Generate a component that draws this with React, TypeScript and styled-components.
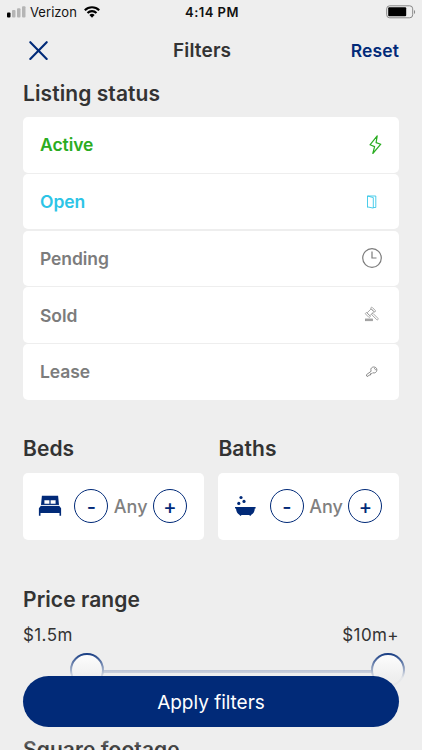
import React from "react";
import styled, { createGlobalStyle } from "styled-components";

const NAVY = "#012a78";

const GlobalStyle = createGlobalStyle`
  * { box-sizing: border-box; }
  html, body { margin: 0; padding: 0; background: #eeeeee; overflow: hidden; }
  body { font-family: Inter, "Liberation Sans", sans-serif; color: #333; }
`;

const Screen = styled.main`
  position: relative;
  width: 422px;
  height: 750px;
  overflow: hidden;
  background: #eeeeee;
`;

const StatusBar = styled.div`
  display: grid;
  grid-template-columns: 1fr auto 1fr;
  align-items: center;
  height: 24px;
  padding: 0 6px 0 7px;
  color: #111;
`;

const Carrier = styled.div`
  display: flex;
  align-items: center;
  font-size: 13px;
  line-height: 24px;
  letter-spacing: 0.05px;
  svg { display: block; }
  span { margin: 0 7px 0 4px; }
`;

const Clock = styled.div`
  padding-left: 1px;
  font-size: 13px;
  font-weight: 600;
  line-height: 24px;
  letter-spacing: 0.45px;
`;

const BatterySlot = styled.div`
  display: flex;
  justify-content: flex-end;
`;

const Header = styled.header`
  display: grid;
  grid-template-columns: 144px auto 1fr;
  align-items: center;
  height: 54px;
  padding: 0 23px 0 29px;
`;

const IconButton = styled.button`
  display: flex;
  width: 20px;
  height: 20px;
  padding: 0;
  border: 0;
  background: none;
`;

const Title = styled.h1`
  margin: 0;
  font-size: 19px;
  font-weight: 600;
  line-height: 24px;
  letter-spacing: 0.15px;
`;

const Reset = styled.button`
  justify-self: end;
  padding: 0;
  border: 0;
  background: none;
  font: 600 17.5px/24px Inter, sans-serif;
  letter-spacing: 0.1px;
  color: ${NAVY};
`;

const Content = styled.div`
  padding: 1px 23px 0;
`;

const Heading = styled.h2`
  margin: 0;
  font-size: 21px;
  font-weight: 600;
  line-height: 30px;
  letter-spacing: 0.08px;
  white-space: nowrap;
`;

const StatusList = styled.div`
  display: grid;
  grid-auto-rows: 55.5px;
  row-gap: 1.25px;
  margin-top: 8px;
`;

const StatusRow = styled.div<{ $color: string }>`
  display: flex;
  align-items: center;
  justify-content: space-between;
  padding: 0 16px 0 17px;
  border-radius: 5px;
  background: #fff;
  color: ${(p) => p.$color};
  font-size: 17.5px;
  font-weight: 600;
  letter-spacing: -0.07px;
  svg { display: block; }
`;

const Rooms = styled.div`
  display: grid;
  grid-template-columns: 180.5px 180.5px;
  column-gap: 14.9px;
  margin-top: 34px;
`;

const CounterCard = styled.div`
  display: flex;
  align-items: center;
  height: 67px;
  margin-top: 9px;
  padding-left: 15.4px;
  border-radius: 5px;
  background: #fff;
  svg { display: block; }
`;

const RoundButton = styled.button`
  display: flex;
  align-items: center;
  justify-content: center;
  width: 34px;
  height: 34px;
  padding: 0;
  border: 1.3px solid ${NAVY};
  border-radius: 50%;
  background: #fff;
  font: 500 20px/30px Inter, sans-serif;
  color: ${NAVY};
  span { padding-top: 2px; }
`;

const CounterValue = styled.span`
  width: 44.6px;
  text-align: center;
  font-size: 18px;
  font-weight: 500;
  color: #808080;
`;

const CounterIcon = styled.span`
  width: 36px;
`;

const PriceSection = styled.section`
  margin-top: 45px;
`;

const PriceLabels = styled.div`
  display: flex;
  justify-content: space-between;
  margin-top: 7px;
  font-size: 17px;
  line-height: 26px;
  letter-spacing: 0.4px;
`;

const Slider = styled.div`
  position: relative;
  height: 34px;
  margin-top: 5px;
`;

const Track = styled.div`
  position: absolute;
  top: 17px;
  left: 64px;
  right: 12px;
  height: 3px;
  background: #4f69a0;
`;

const Thumb = styled.div<{ $x: number }>`
  position: absolute;
  top: 0;
  left: ${(p) => p.$x}px;
  width: 34px;
  height: 34px;
  border: 2px solid ${NAVY};
  border-radius: 50%;
  background: #fff;
`;

const FootageSection = styled.section`
  margin-top: 48px;
`;

const Footer = styled.div`
  position: absolute;
  left: 0;
  right: 0;
  bottom: 0;
  height: 99px;
  padding: 25px 23px 0;
  background: linear-gradient(
    to bottom,
    rgba(238, 238, 238, 0) 0,
    rgba(238, 238, 238, 0.97) 27px,
    rgba(238, 238, 238, 0.97) 70px,
    rgba(238, 238, 238, 0) 100%
  );
`;

const Apply = styled.button`
  display: block;
  width: 376px;
  height: 51px;
  padding: 0;
  border: 0;
  border-radius: 26px;
  background: ${NAVY};
  color: #fff;
  font: 400 19px/53px Inter, sans-serif;
  letter-spacing: -0.02px;
`;

const Signal = () => (
  <svg width="19" height="12" viewBox="0 0 19 12">
    <rect x="0" y="6.5" width="3.5" height="5" rx="1" fill="#000" />
    <rect x="5" y="4" width="3.5" height="7.5" rx="1" fill="#b5b5b5" />
    <rect x="10" y="2.3" width="3.5" height="9.2" rx="1" fill="#b5b5b5" />
    <rect x="15" y="0.3" width="3.5" height="11.2" rx="1" fill="#b5b5b5" />
  </svg>
);

const Wifi = () => (
  <svg width="16" height="12" viewBox="0 0 16 12" fill="none" stroke="#000" strokeWidth="2.1">
    <path d="M.8 4.3a10.2 10.2 0 0 1 14.4 0M3.5 7a6.4 6.4 0 0 1 9 0" />
    <path d="M5.4 9a3.7 3.7 0 0 1 5.2 0L8 11.7Z" fill="#000" stroke="none" />
  </svg>
);

const Battery = () => (
  <svg width="30" height="14" viewBox="0 0 30 14">
    <rect x=".7" y=".8" width="26" height="12" rx="3" fill="none" stroke="#888" />
    <rect x="2.2" y="2.3" width="18" height="9" rx="1" fill="#000" />
    <path d="M28 5v4c1.5-.7 1.5-3.3 0-4Z" fill="#888" />
  </svg>
);

const Bolt = () => (
  <svg width="16" height="22" viewBox="0 0 16 22" fill="none" stroke="currentColor" strokeWidth="1.2" strokeLinejoin="round">
    <path d="M10.2 1.9 3 10.8l4.6 1.8-1.8 6.9 8-9.3-4.7-1.6Z" />
  </svg>
);

const Door = () => (
  <svg width="22" height="22" viewBox="0 0 22 22" fill="none" stroke="currentColor" strokeWidth=".85">
    <path d="M6.5 16.5V5h8.3v11.5M6.5 5l5.8 1.6v10.5l-5.8-1.2M12.3 16.5h2.5" />
  </svg>
);

const ClockIcon = () => (
  <svg width="22" height="22" viewBox="0 0 22 22" fill="none" stroke="currentColor" strokeWidth="1.2">
    <circle cx="11" cy="11" r="9.3" />
    <path d="M11 4.5V11h4.5" />
  </svg>
);

const Gavel = () => (
  <svg width="22" height="22" viewBox="0 0 22 22" fill="none" stroke="#999" strokeWidth=".8">
    <g transform="rotate(-45 9.5 8.3)">
      <rect x="6.6" y="6.3" width="5.8" height="4" />
      <rect x="4.8" y="5.4" width="1.8" height="5.8" rx=".7" />
      <rect x="12.4" y="5.4" width="1.8" height="5.8" rx=".7" />
      <rect x="8.7" y="10.3" width="1.8" height="8.4" rx=".8" />
    </g>
    <rect x="4.4" y="15" width="7" height="1.7" fill="#aaa" />
  </svg>
);

const KeyIcon = () => (
  <svg width="22" height="22" viewBox="0 0 22 22" fill="none" stroke="currentColor" strokeWidth=".9" strokeLinejoin="round">
    <path d="M10.2 10.2C9 7.5 11 5.8 13.2 6c2.4.2 3.4 2.7 2.2 4.6-.9 1.4-2.4 1.6-3.6 1.1l-1 1H9.5V14H8.2l-1.3 1.5-1.3-.5v-1.4Z" />
    <path d="M13.2 7.5c1.2.1 1.5 1 1 1.7" />
  </svg>
);

const Bed = () => (
  <svg width="24" height="22" viewBox="0 0 24 22" fill={NAVY}>
    <path fillRule="evenodd" d="M3.9.8h16.2l.9 9.2H3ZM6.4 5.3v3.4h5V5.3Zm6.2 0v3.4h5V5.3Z" />
    <path d="M.9 20.8v-7.5l2-2.5h18.2l2 2.5v7.5h-1.6V18h-19v2.8Z" />
    <path d="M3.2 10.4h17.6" stroke="#fff" strokeWidth=".6" />
  </svg>
);

const Bath = () => (
  <svg width="24" height="22" viewBox="0 0 24 22" fill={NAVY}>
    <circle cx="7" cy="2.5" r="1.6" />
    <circle cx="10" cy="6.4" r="1.6" />
    <circle cx="4.8" cy="8.4" r="1.6" />
    <path d="M1 12h20.6v1.5h-.8c-.2 3.3-1.4 5.4-3.5 6.2l-1 1.3-1.2-.9H7.6l-1.2.9-1-1.3c-2-.9-3.1-2.9-3.4-6.2H1Z" />
  </svg>
);

const statuses = [
  { label: "Active", color: "#2aac21", icon: <Bolt /> },
  { label: "Open", color: "#2cc4e6", icon: <Door /> },
  { label: "Pending", color: "#7c7c7c", icon: <ClockIcon /> },
  { label: "Sold", color: "#7c7c7c", icon: <Gavel /> },
  { label: "Lease", color: "#7c7c7c", icon: <KeyIcon /> },
];

const Counter = ({ title, icon }: { title: string; icon: React.ReactNode }) => (
  <section>
    <Heading>{title}</Heading>
    <CounterCard>
      <CounterIcon>{icon}</CounterIcon>
      <RoundButton><span>-</span></RoundButton>
      <CounterValue>Any</CounterValue>
      <RoundButton><span>+</span></RoundButton>
    </CounterCard>
  </section>
);

export default function App() {
  return (
    <Screen>
      <GlobalStyle />
      <StatusBar>
        <Carrier>
          <Signal />
          <span>Verizon</span>
          <Wifi />
        </Carrier>
        <Clock>4:14 PM</Clock>
        <BatterySlot>
          <Battery />
        </BatterySlot>
      </StatusBar>
      <Header>
        <IconButton aria-label="Close">
          <svg width="20" height="20" viewBox="0 0 20 20" stroke={NAVY} strokeWidth="2.1" strokeLinecap="round">
            <path d="m1.3 1.2 16.4 16.8M17.7 1.2 1.3 18" />
          </svg>
        </IconButton>
        <Title>Filters</Title>
        <Reset>Reset</Reset>
      </Header>
      <Content>
        <Heading>Listing status</Heading>
        <StatusList>
          {statuses.map((s) => (
            <StatusRow key={s.label} $color={s.color}>
              <span>{s.label}</span>
              {s.icon}
            </StatusRow>
          ))}
        </StatusList>
        <Rooms>
          <Counter title="Beds" icon={<Bed />} />
          <Counter title="Baths" icon={<Bath />} />
        </Rooms>
        <PriceSection>
          <Heading>Price range</Heading>
          <PriceLabels>
            <span>$1.5m</span>
            <span>$10m+</span>
          </PriceLabels>
          <Slider>
            <Track />
            <Thumb $x={47.4} />
            <Thumb $x={347.8} />
          </Slider>
        </PriceSection>
        <FootageSection>
          <Heading>Square footage</Heading>
        </FootageSection>
      </Content>
      <Footer>
        <Apply>Apply filters</Apply>
      </Footer>
    </Screen>
  );
}
